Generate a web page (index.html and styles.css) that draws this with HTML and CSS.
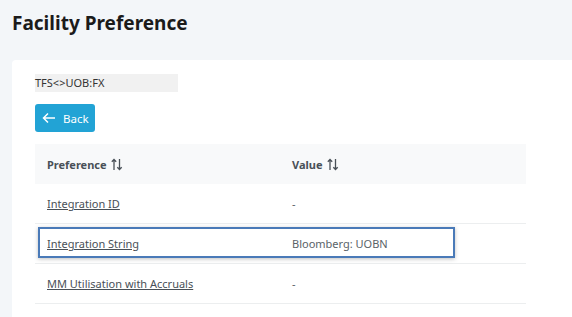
FILE: index.html
```html
<!DOCTYPE html>
<html lang="en">
<head>
    <meta charset="UTF-8">
    <title>Facility Preference</title>
    <link rel="stylesheet" href="styles.css">
</head>
<body>
    <h1 class="page-title">Facility Preference</h1>

    <div class="card">
        <div class="facility-name">TFS&lt;&gt;UOB:FX</div>

        <button class="btn-back">
            <svg width="14" height="12" viewBox="0 0 14 12"><path d="M13 6H1.5M6 1.5L1.5 6 6 10.5" fill="none" stroke="#fff" stroke-width="1.5"/></svg>
            Back
        </button>

        <table class="pref-table">
            <thead>
                <tr>
                    <th class="col-pref">Preference <svg class="sort-icon" width="12" height="13" viewBox="0 0 12 13"><path d="M3 12V1.5M0.8 3.8L3 1.5 5.2 3.8M8.5 1V11.5M6.3 9.2L8.5 11.5 10.7 9.2" fill="none" stroke="#495057" stroke-width="1.3"/></svg></th>
                    <th>Value <svg class="sort-icon" width="12" height="13" viewBox="0 0 12 13"><path d="M3 12V1.5M0.8 3.8L3 1.5 5.2 3.8M8.5 1V11.5M6.3 9.2L8.5 11.5 10.7 9.2" fill="none" stroke="#495057" stroke-width="1.3"/></svg></th>
                </tr>
            </thead>
            <tbody>
                <tr>
                    <td><a href="#">Integration ID</a></td>
                    <td>-</td>
                </tr>
                <tr class="focused">
                    <td><a href="#">Integration String</a><div class="focus-ring"></div></td>
                    <td>Bloomberg: UOBN</td>
                </tr>
                <tr>
                    <td><a href="#">MM Utilisation with Accruals</a></td>
                    <td>-</td>
                </tr>
            </tbody>
        </table>
    </div>
</body>
</html>
```

FILE: styles.css
```css
body {
    margin: 0;
    font-family: 'Noto Sans', 'Open Sans', sans-serif;
    background-color: #f3f6f9;
    color: #495057;
}

.page-title {
    margin: 0;
    padding: 10px 12px 0;
    height: 50px;
    font-size: 19px;
    font-weight: bold;
    color: #1b1b1b;
}

.card {
    margin-left: 12px;
    padding: 14px 46px 14px 23px;
    background: white;
    border-top-left-radius: 4px;
}

.facility-name {
    width: 143px;
    height: 18px;
    line-height: 18px;
    font-size: 11px;
    color: #333;
    background-color: #f1f1f1;
}

.btn-back {
    display: flex;
    align-items: center;
    gap: 7px;
    margin-top: 12px;
    width: 60px;
    height: 28px;
    padding: 0 0 0 7px;
    border: none;
    border-radius: 3px;
    background-color: #22a3d5;
    color: white;
    font-family: inherit;
    font-size: 11.5px;
    cursor: pointer;
}

.pref-table {
    margin-top: 12px;
    width: 100%;
    border-collapse: collapse;
    font-size: 11px;
}

.pref-table th {
    height: 40px;
    padding: 0 12px;
    text-align: left;
    font-weight: bold;
    background-color: #f8f9fa;
    color: #495057;
}

.col-pref {
    width: 221px;
}

.sort-icon {
    vertical-align: -2px;
    margin-left: 2px;
}

.pref-table td {
    height: 39px;
    padding: 0 12px;
    border-bottom: 1px solid #eceeef;
    color: #5a6268;
}

.pref-table a {
    color: #495057;
    text-decoration: underline;
}

.focused td:first-child {
    position: relative;
}

.focus-ring {
    position: absolute;
    left: 3px;
    top: 3px;
    width: 413px;
    height: 27px;
    border: 2px solid #4a7ab8;
    box-shadow: 0 1px 4px rgba(0, 0, 0, 0.25);
    pointer-events: none;
}
```
